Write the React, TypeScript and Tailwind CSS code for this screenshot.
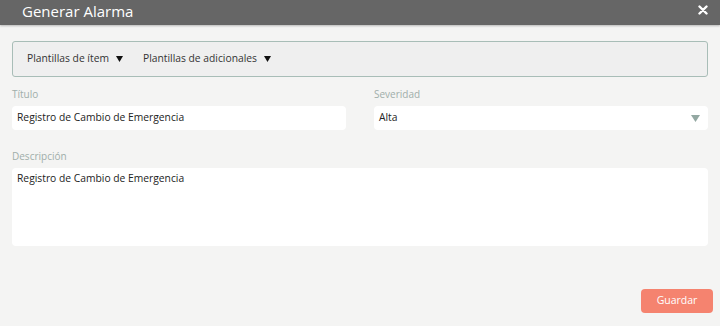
import React from 'react';

const Caret = ({ color = '#111' }: { color?: string }) => (
  <svg width="7" height="6" viewBox="0 0 7 6">
    <path d="M0 0 H7 L3.5 6 Z" fill={color} />
  </svg>
);

const App = () => {
  return (
    <div
      className="w-[720px] h-[326px] bg-[#f4f4f3] flex flex-col overflow-hidden"
      style={{ fontFamily: '"Open Sans", "Noto Sans", sans-serif' }}
    >
      <div className="h-[25px] bg-[#666666] flex items-center justify-between pl-[22px] pr-[12px] shadow-[0_1px_2px_rgba(0,0,0,0.25)]">
        <h1 className="text-white text-[15px] font-medium leading-none mb-[3px]">Generar Alarma</h1>
        <svg width="10" height="10" viewBox="0 0 10 10" className="mb-[6px]">
          <path d="M1.5 1.5 L8.5 8.5 M8.5 1.5 L1.5 8.5" stroke="#fff" strokeWidth="2.4" strokeLinecap="round" />
        </svg>
      </div>

      <div className="flex flex-col px-[12px] pt-[16px]">
        <div className="h-[36px] border border-[#a8bdb7] bg-[#efefef] rounded-[3px] flex items-center pl-[14px] gap-[20px] text-[10.3px] text-[#333]">
          <button className="flex items-center gap-[7px]">
            Plantillas de ítem
            <Caret />
          </button>
          <button className="flex items-center gap-[7px]">
            Plantillas de adicionales
            <Caret />
          </button>
        </div>

        <div className="grid grid-cols-2 gap-[28px] mt-[11px]">
          <div className="flex flex-col">
            <label className="text-[10px] text-[#a0aeaa] h-[18px] leading-[13px]">Título</label>
            <div className="h-[24px] bg-white rounded-[4px] flex items-center px-[5px] text-[10.3px] text-[#222]">
              Registro de Cambio de Emergencia
            </div>
          </div>
          <div className="flex flex-col">
            <label className="text-[10px] text-[#a0aeaa] h-[18px] leading-[13px]">Severidad</label>
            <div className="h-[24px] bg-white rounded-[4px] flex items-center justify-between px-[5px] pr-[8px] text-[10.3px] text-[#222]">
              Alta
              <svg width="9" height="7" viewBox="0 0 9 7">
                <path d="M0 0 H9 L4.5 7 Z" fill="#93a8a2" />
              </svg>
            </div>
          </div>
        </div>

        <div className="flex flex-col mt-[20px]">
          <label className="text-[10px] text-[#a0aeaa] h-[18px] leading-[13px]">Descripción</label>
          <div className="h-[78px] bg-white rounded-[4px] px-[5px] pt-[3px] text-[10.3px] text-[#222]">
            Registro de Cambio de Emergencia
          </div>
        </div>

        <div className="flex justify-end mt-[43px]">
          <button className="w-[72px] h-[24px] bg-[#f5836f] rounded-[4px] text-white text-[10.5px] mr-[-5px]">
            Guardar
          </button>
        </div>
      </div>
    </div>
  );
};

export default App;
